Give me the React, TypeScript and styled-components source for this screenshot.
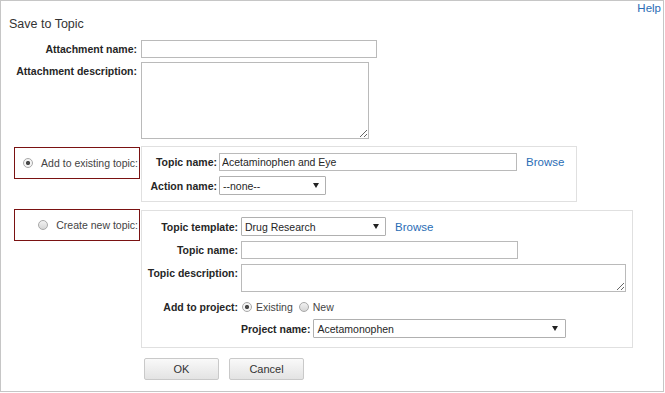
import React from 'react';
import styled, { createGlobalStyle } from 'styled-components';

const GlobalStyle = createGlobalStyle`
    body {
        margin: 0;
        background: #fff;
        font-family: "Liberation Sans", Arial, sans-serif;
    }
`;

const Frame = styled.div`
    width: 664px;
    height: 392px;
    box-sizing: border-box;
    border: 1px solid #c6c6c6;
    background: #fff;
    font-size: 10.5px;
    color: #333;
`;

const HelpBar = styled.div`
    display: flex;
    justify-content: flex-end;
    height: 14px;
    padding-right: 2px;
`;

const Link = styled.a<{ $ml?: number }>`
    color: #2a6db5;
    font-size: 11.5px;
    line-height: 14px;
    text-decoration: none;
    cursor: pointer;
    margin-left: ${p => p.$ml ?? 0}px;
    white-space: nowrap;
`;

const Title = styled.div`
    margin-top: 2px;
    padding-left: 8px;
    font-size: 12.5px;
    line-height: 15px;
    color: #333;
`;

const Row = styled.div<{ $mt: number }>`
    display: flex;
    align-items: flex-start;
    margin-top: ${p => p.$mt}px;
`;

const Side = styled.div`
    width: 140px;
    flex: none;
    display: flex;
    justify-content: flex-end;
`;

const FieldLabel = styled.label`
    font-weight: bold;
    line-height: 18px;
    padding-right: 4px;
    white-space: nowrap;
    color: #262626;
`;

const TextInput = styled.input<{ $w: number }>`
    box-sizing: border-box;
    width: ${p => p.$w}px;
    height: 18px;
    margin: 0;
    padding: 0 2px;
    border: 1px solid #bababa;
    font: inherit;
    color: #262626;
    background: #fff;
    outline: none;
`;

const TextArea = styled.textarea<{ $w: number; $h: number }>`
    display: block;
    box-sizing: border-box;
    width: ${p => p.$w}px;
    height: ${p => p.$h}px;
    margin: 0;
    padding: 2px;
    border: 1px solid #bababa;
    font: inherit;
    background: #fff;
    outline: none;
`;

const ChoiceBox = styled.div<{ $mt: number }>`
    box-sizing: border-box;
    width: 126px;
    height: 32px;
    margin: ${p => p.$mt}px 1px 0 0;
    border: 1px solid #7a1212;
    display: flex;
    align-items: center;
    justify-content: flex-end;
    gap: 8px;
    padding-right: 1px;
    white-space: nowrap;
    color: #444;
`;

const Radio = styled.span<{ $on?: boolean; $ml?: number }>`
    box-sizing: border-box;
    flex: none;
    width: 10px;
    height: 10px;
    border-radius: 50%;
    border: 1px solid #a8a8a8;
    margin-left: ${p => p.$ml ?? 0}px;
    background: ${p =>
        p.$on
            ? 'radial-gradient(circle, #4a4a4a 0 1.8px, #f4f4f4 2.4px)'
            : 'linear-gradient(#f2f2f2, #d6d6d6)'};
`;

const Panel = styled.div<{ $w: number; $pb: number }>`
    box-sizing: border-box;
    width: ${p => p.$w}px;
    border: 1px solid #e0e0e0;
    padding: 6px 0 ${p => p.$pb}px 0;
    display: flex;
    flex-direction: column;
`;

const PanelRow = styled.div<{ $mt?: number; $top?: boolean }>`
    display: flex;
    align-items: ${p => (p.$top ? 'flex-start' : 'center')};
    margin-top: ${p => p.$mt ?? 0}px;
`;

const PanelLabel = styled.label<{ $w: number; $gap: number }>`
    width: ${p => p.$w}px;
    flex: none;
    margin-right: ${p => p.$gap}px;
    text-align: right;
    font-weight: bold;
    line-height: 18px;
    white-space: nowrap;
    color: #262626;
`;

const InlineLabel = styled.label`
    font-weight: bold;
    line-height: 18px;
    margin-right: 3px;
    white-space: nowrap;
    color: #262626;
`;

const Select = styled.div<{ $w: number; $pr: number }>`
    box-sizing: border-box;
    width: ${p => p.$w}px;
    height: 19px;
    border: 1px solid #b0b0b0;
    border-radius: 1px;
    background: #fff;
    display: flex;
    align-items: center;
    justify-content: space-between;
    padding: 0 ${p => p.$pr}px 0 3px;
    color: #262626;
    white-space: nowrap;
`;

const Option = styled.span<{ $ml?: number }>`
    margin-left: ${p => p.$ml ?? 0}px;
    margin-right: 4px;
    color: #444;
    white-space: nowrap;
`;

const Buttons = styled.div`
    display: flex;
    gap: 10px;
    margin-left: 3px;
`;

const Button = styled.button`
    box-sizing: border-box;
    width: 75px;
    height: 22px;
    padding: 0;
    border: 1px solid #c9c9c9;
    border-radius: 2px;
    background: linear-gradient(#f9f9f9, #e3e3e3);
    font: inherit;
    font-size: 11px;
    color: #333;
`;

const Arrow = () => (
    <svg width="6" height="5" viewBox="0 0 6 5">
        <polygon points="0,0 6,0 3,5" fill="#222" />
    </svg>
);

export default function App() {
    return (
        <Frame>
            <GlobalStyle />
            <HelpBar>
                <Link>Help</Link>
            </HelpBar>
            <Title>Save to Topic</Title>

            <Row $mt={8}>
                <Side>
                    <FieldLabel>Attachment name:</FieldLabel>
                </Side>
                <TextInput $w={236} />
            </Row>
            <Row $mt={4}>
                <Side>
                    <FieldLabel>Attachment description:</FieldLabel>
                </Side>
                <TextArea $w={228} $h={77} />
            </Row>

            <Row $mt={7}>
                <Side>
                    <ChoiceBox $mt={1}>
                        <Radio $on />
                        <span>Add to existing topic:</span>
                    </ChoiceBox>
                </Side>
                <Panel $w={436} $pb={6}>
                    <PanelRow>
                        <PanelLabel $w={75} $gap={2}>Topic name:</PanelLabel>
                        <TextInput $w={298} defaultValue="Acetaminophen and Eye" />
                        <Link $ml={9}>Browse</Link>
                    </PanelRow>
                    <PanelRow $mt={5}>
                        <PanelLabel $w={75} $gap={2}>Action name:</PanelLabel>
                        <Select $w={107} $pr={6}>
                            <span>--none--</span>
                            <Arrow />
                        </Select>
                    </PanelRow>
                </Panel>
            </Row>

            <Row $mt={8}>
                <Side>
                    <ChoiceBox $mt={-1}>
                        <Radio />
                        <span>Create new topic:</span>
                    </ChoiceBox>
                </Side>
                <Panel $w={492} $pb={9}>
                    <PanelRow>
                        <PanelLabel $w={96} $gap={3}>Topic template:</PanelLabel>
                        <Select $w={145} $pr={6}>
                            <span>Drug Research</span>
                            <Arrow />
                        </Select>
                        <Link $ml={9}>Browse</Link>
                    </PanelRow>
                    <PanelRow $mt={5}>
                        <PanelLabel $w={96} $gap={3}>Topic name:</PanelLabel>
                        <TextInput $w={277} />
                    </PanelRow>
                    <PanelRow $mt={5} $top>
                        <PanelLabel $w={96} $gap={3}>Topic description:</PanelLabel>
                        <TextArea $w={385} $h={28} />
                    </PanelRow>
                    <PanelRow $mt={5} style={{ height: 20 }}>
                        <PanelLabel $w={96} $gap={3}>Add to project:</PanelLabel>
                        <Radio $on $ml={1} />
                        <Option $ml={4}>Existing</Option>
                        <Radio $ml={2} />
                        <Option $ml={4}>New</Option>
                    </PanelRow>
                    <PanelRow $mt={2}>
                        <PanelLabel $w={96} $gap={3} />
                        <InlineLabel>Project name:</InlineLabel>
                        <Select $w={253} $pr={7}>
                            <span>Acetamonophen</span>
                            <Arrow />
                        </Select>
                    </PanelRow>
                </Panel>
            </Row>

            <Row $mt={10}>
                <Side />
                <Buttons>
                    <Button>OK</Button>
                    <Button>Cancel</Button>
                </Buttons>
            </Row>
        </Frame>
    );
}
